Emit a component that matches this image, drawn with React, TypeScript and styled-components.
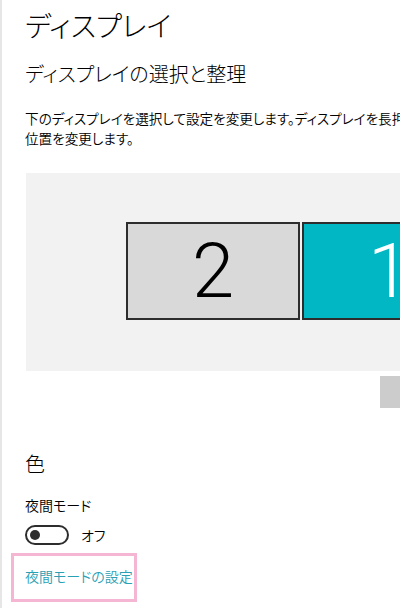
import React from "react";
import styled, { createGlobalStyle } from "styled-components";

const GlobalStyle = createGlobalStyle`
  html, body {
    margin: 0;
    padding: 0;
    background: #ffffff;
    overflow: hidden;
  }
  body {
    font-family: "Noto Sans CJK JP", "Noto Sans", sans-serif;
    color: #000000;
  }
`;

const Page = styled.div`
  width: 400px;
  height: 608px;
  box-sizing: border-box;
  border-left: 2px solid #e6e6e6;
  padding-left: 23px;
  overflow: hidden;
  font-feature-settings: "palt";
  font-weight: 350;
`;

const Title = styled.h1`
  margin: 5px 0 0;
  font-size: 28px;
  line-height: 40px;
  font-weight: 300;
  white-space: nowrap;
`;

const SectionTitle = styled.h2<{ $top: number }>`
  margin: ${(p) => p.$top}px 0 0;
  font-size: 20px;
  line-height: 28px;
  font-weight: 300;
  white-space: nowrap;
`;

const Description = styled.p`
  margin: 20px 0 0;
  font-size: 13.6px;
  line-height: 20px;
  white-space: nowrap;
`;

const Line = styled.span`
  display: block;
`;

const Arrange = styled.div`
  margin: 25px 0 0 1px;
  width: 520px;
  height: 198px;
  background: #f2f2f2;
  box-sizing: border-box;
  padding: 49px 0 0 100px;
  display: flex;
  align-items: flex-start;
  gap: 2px;
`;

const Monitor = styled.div<{ $active?: boolean }>`
  width: 174px;
  height: 98px;
  box-sizing: border-box;
  border: 2px solid #2d2d2d;
  background: ${(p) => (p.$active ? "#00b7c3" : "#d9d9d9")};
  color: ${(p) => (p.$active ? "#ffffff" : "#000000")};
  display: flex;
  align-items: center;
  justify-content: center;
  font-family: Roboto, "Noto Sans", sans-serif;
  font-weight: 300;
  font-size: 76px;
  line-height: 1;
`;

const ButtonRow = styled.div`
  margin-top: 5px;
  padding-left: 355px;
  display: flex;
`;

const GrayButton = styled.div`
  width: 90px;
  height: 32px;
  background: #cccccc;
`;

const Label = styled.div`
  margin-top: 17px;
  font-size: 14px;
  line-height: 20px;
`;

const ToggleRow = styled.div`
  margin-top: 10px;
  display: flex;
  align-items: center;
  gap: 12px;
`;

const Toggle = styled.div`
  width: 44px;
  height: 20px;
  box-sizing: border-box;
  border: 2px solid #2d2d2d;
  border-radius: 10px;
  display: flex;
  align-items: center;
  padding-left: 3px;
`;

const Knob = styled.div`
  width: 10px;
  height: 10px;
  border-radius: 50%;
  background: #2d2d2d;
`;

const ToggleText = styled.span`
  font-size: 14px;
  line-height: 20px;
`;

const LinkBox = styled.div`
  margin: 8px 0 0 -14px;
  width: 126px;
  height: 49px;
  box-sizing: border-box;
  border: 3px solid #f4b6d2;
  padding: 0 0 3px 11px;
  display: flex;
  align-items: center;
`;

const LinkText = styled.a`
  font-size: 14px;
  line-height: 20px;
  color: #2aa0b4;
  text-decoration: none;
  white-space: nowrap;
`;

export default function App() {
  return (
    <>
      <GlobalStyle />
      <Page>
        <Title>ディスプレイ</Title>
        <SectionTitle $top={15}>ディスプレイの選択と整理</SectionTitle>
        <Description>
          <Line>下のディスプレイを選択して設定を変更します。ディスプレイを長押しして、</Line>
          <Line>位置を変更します。</Line>
        </Description>
        <Arrange>
          <Monitor>2</Monitor>
          <Monitor $active>1</Monitor>
        </Arrange>
        <ButtonRow>
          <GrayButton />
        </ButtonRow>
        <SectionTitle $top={42}>色</SectionTitle>
        <Label>夜間モード</Label>
        <ToggleRow>
          <Toggle>
            <Knob />
          </Toggle>
          <ToggleText>オフ</ToggleText>
        </ToggleRow>
        <LinkBox>
          <LinkText href="#">夜間モードの設定</LinkText>
        </LinkBox>
      </Page>
    </>
  );
}
